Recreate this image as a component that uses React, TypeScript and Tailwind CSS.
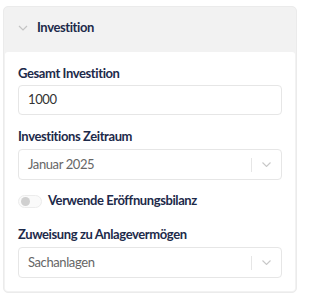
export default function App() {
  return (
    <div className="w-[300px] h-[294px] bg-white px-[3px] pt-[6px] pb-[2px] tracking-[-0.4px]" style={{ fontFamily: 'Lato, "Noto Sans", sans-serif' }}>
      <div className="rounded-[5px] border border-[#ebebeb] bg-[#f2f2f2]">
        <div className="flex h-[45px] items-center gap-[9px] pb-[4px] pl-[14px]">
          <svg width="10" height="6" viewBox="0 0 10 6" fill="none" stroke="#c4c4c4" strokeWidth="1.2">
            <path d="M1 1l4 4 4-4" />
          </svg>
          <span className="text-[13px] font-bold text-[#1d2a4a]">Investition</span>
        </div>
        <div className="mx-[1px] mb-[1px] flex flex-col rounded-[3px] bg-white px-[13px] pt-[12px] pb-[13px]">
          <label className="text-[13px] leading-[18px] font-bold text-[#1d2a4a]">Gesamt Investition</label>
          <div className="mt-[3px] flex h-[30px] items-center rounded-[4px] border border-[#e6e6e6] px-[9px] text-[13px] text-[#333]">
            1000
          </div>
          <label className="mt-[12px] text-[13px] leading-[18px] font-bold text-[#1d2a4a]">Investitions Zeitraum</label>
          <Select value="Januar 2025" />
          <div className="mt-[12px] flex h-[18px] items-center gap-[6px]">
            <div className="flex h-[13px] w-[24px] items-center rounded-full border border-[#ececec] bg-[#fafafa] px-[2px]">
              <div className="h-[9px] w-[9px] rounded-full bg-[#d0d0d0]" />
            </div>
            <span className="text-[13px] font-bold text-[#1d2a4a]">Verwende Eröffnungsbilanz</span>
          </div>
          <label className="mt-[15px] text-[13px] leading-[18px] font-bold text-[#1d2a4a]">Zuweisung zu Anlagevermögen</label>
          <Select value="Sachanlagen" />
        </div>
      </div>
    </div>
  );
}

function Select({ value }: { value: string }) {
  return (
    <div className="mt-[4px] flex h-[31px] items-center rounded-[4px] border border-[#e6e6e6]">
      <span className="flex-1 px-[9px] text-[13px] text-[#666]">{value}</span>
      <div className="h-[14px] w-px bg-[#e6e6e6]" />
      <div className="flex w-[29px] justify-center">
        <svg width="9" height="5" viewBox="0 0 9 5" fill="none" stroke="#c8c8c8" strokeWidth="1.1">
          <path d="M0.5 0.5l4 4 4-4" />
        </svg>
      </div>
    </div>
  );
}
